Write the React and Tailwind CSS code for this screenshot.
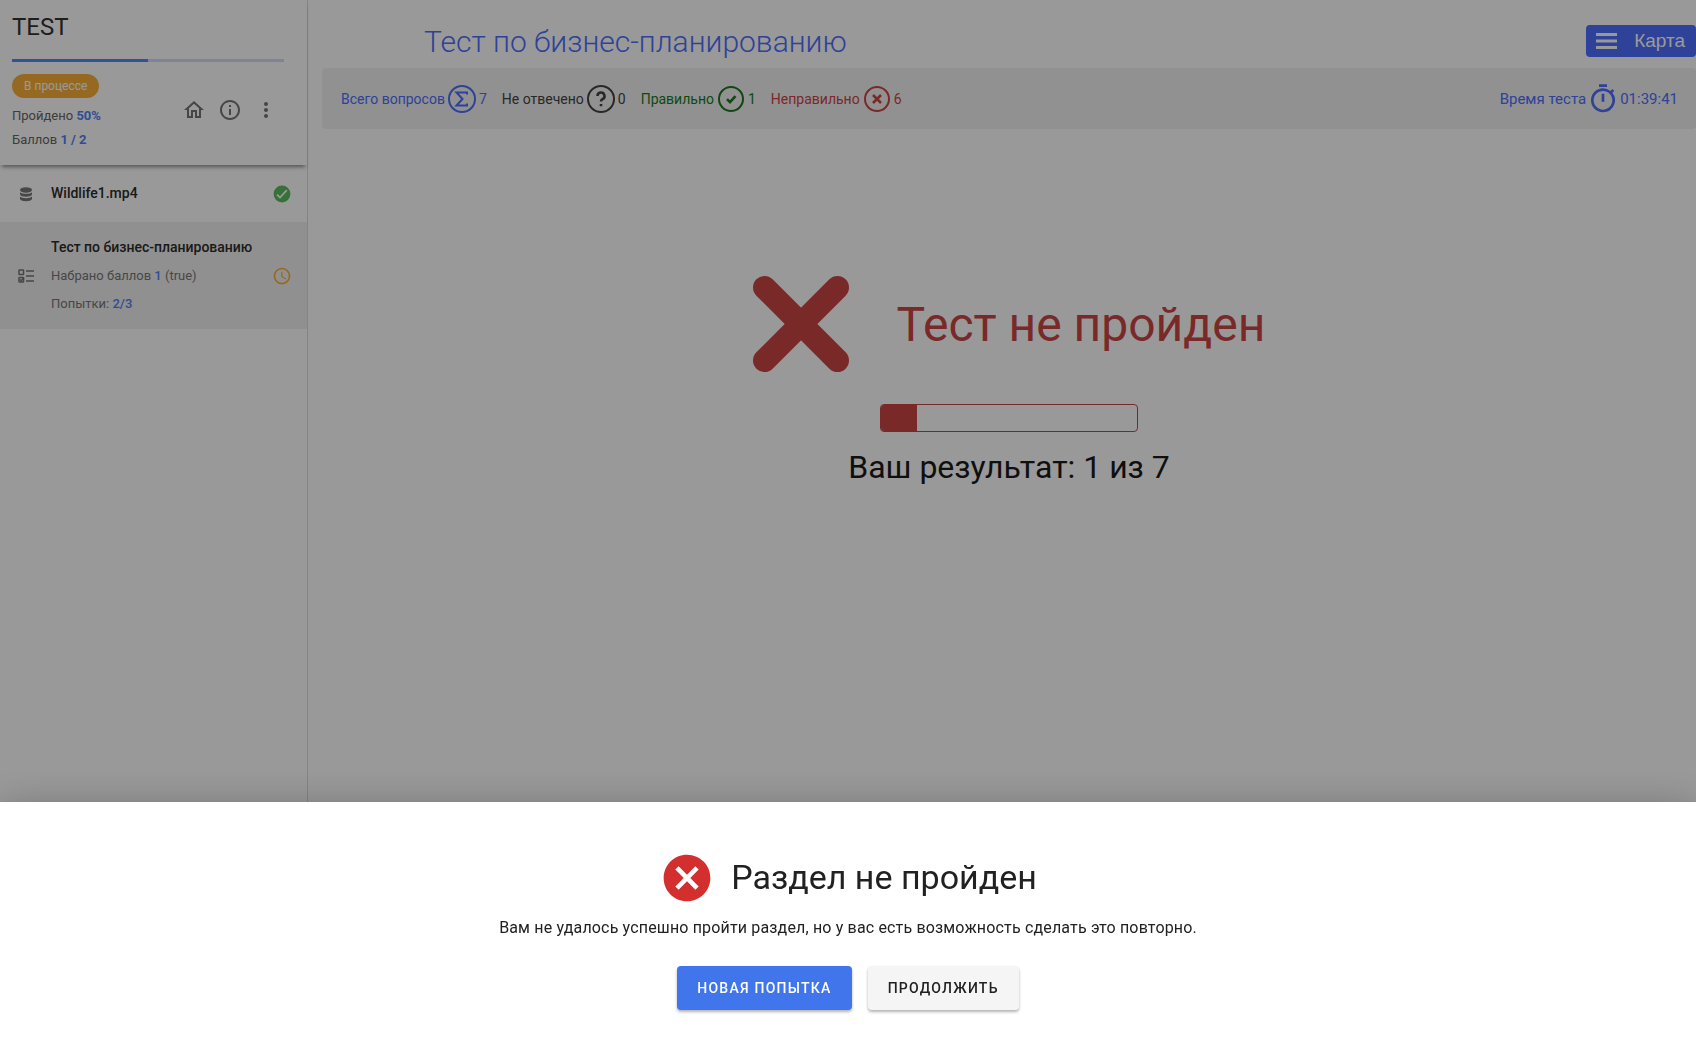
import React from 'react';
import { MdOutlineHome, MdInfoOutline, MdMoreVert, MdAccessTime, MdCancel, MdOutlineTimer } from 'react-icons/md';

const stats = [
  { label: 'Всего вопросов', value: 7, icon: 'sum', color: 'text-[#4b6efd]' },
  { label: 'Не отвечено', value: 0, icon: 'question', color: 'text-[#444444]' },
  { label: 'Правильно', value: 1, icon: 'check', color: 'text-[#1a7a1a]' },
  { label: 'Неправильно', value: 6, icon: 'cross', color: 'text-[#cc4444]' },
];

const glyphs = {
  sum: 'M20 10.5V8.5H9.5l6 6.5-6 6.5H20v-2',
  question: 'M11.5 12a3.5 3.5 0 1 1 5 3.2c-1 .6-1.5 1.1-1.5 2.3M15 20v2.2',
  check: 'M11 15.2l3 3 5.5-6',
  cross: 'M11 11l8 8M19 11l-8 8',
};

function StatIcon({ name }) {
  return (
    <svg viewBox="0 0 30 30" className="size-[30px]" fill="none" stroke="currentColor" aria-hidden="true">
      <circle cx="15" cy="15" r={name === 'check' || name === 'cross' ? 12 : 13} strokeWidth="2" />
      <path d={glyphs[name]} strokeWidth={name === 'sum' ? 2 : 2.6} />
    </svg>
  );
}

function DatabaseIcon() {
  return (
    <svg viewBox="0 0 12 15" className="w-3 h-[15px]" fill="currentColor" aria-hidden="true">
      <ellipse cx="6" cy="3" rx="6" ry="2.7" />
      <path d="M0 5.2c2 2.2 10 2.2 12 0v2.200c-1 3-11 3-12 0zM0 9.600c2 2.200 10 2.200 12 0v2.400c-1 3-11 3-12 0z" />
    </svg>
  );
}

function QuizIcon() {
  return (
    <svg viewBox="0 0 16 14" className="w-4 h-[14px]" fill="none" stroke="currentColor" strokeWidth="1.5" aria-hidden="true">
      <rect x="1" y="1" width="4.5" height="4.5" rx="0.5" />
      <rect x="1" y="8.5" width="4.5" height="4.5" rx="0.5" />
      <path d="M2 10.5l1.2 1.2L6 8.5M8 2h8M8 7h8M8 12h8" />
    </svg>
  );
}

function DoneIcon() {
  return (
    <svg viewBox="0 0 20 20" className="size-5" fill="none" aria-hidden="true">
      <circle cx="10" cy="10" r="8.4" fill="#5cbb60" />
      <path d="M5 10.6l3 3 6.8-7.4" stroke="#fff" strokeWidth="1.7" />
    </svg>
  );
}

function Sidebar() {
  return (
    <aside className="w-[308px] shrink-0 border-r border-[#dcdcdc]">
      <div className="relative h-[165px] px-3 pt-3 bg-white shadow-[0_4px_4px_-2px_rgba(0,0,0,0.45)]">
        <h2 className="text-2xl leading-[30px] text-[#333333]">TEST</h2>
        <div className="mt-[17px] mr-[11px] h-[3px] bg-[#cfdcfb]">
          <div className="h-full w-1/2 bg-[#5687ff]"></div>
        </div>
        <div className="flex items-center justify-between mt-3">
          <div className="text-[13px] leading-6 text-[#666666]">
            <span className="inline-block rounded-full bg-[#fbb03b] px-3 text-xs leading-6 text-white">В процессе</span>
            <p className="mt-[6px]">Пройдено <b className="font-bold text-[#5280f5]">50%</b></p>
            <p>Баллов <b className="font-bold text-[#5280f5]">1 / 2</b></p>
          </div>
          <div className="flex gap-3 mr-[17px] pb-[6px] text-2xl text-[#757575]">
            <button type="button" aria-label="Домой"><MdOutlineHome /></button>
            <button type="button" aria-label="Информация"><MdInfoOutline /></button>
            <button type="button" aria-label="Ещё"><MdMoreVert /></button>
          </div>
        </div>
      </div>
      <ul className="pt-px">
        <li className="flex items-center h-14 pl-[18px] pr-[15px]">
          <span className="flex w-4 justify-center text-[#777777]"><DatabaseIcon /></span>
          <span className="flex-1 ml-[17px] pb-[2px] text-sm font-medium text-[#2c2c2c]">Wildlife1.mp4</span>
          <DoneIcon />
        </li>
        <li className="flex items-center h-[107px] pl-[18px] pr-[15px] bg-[#f0f0f0]">
          <span className="text-[#777777]"><QuizIcon /></span>
          <div className="flex-1 ml-[17px] text-[13px] leading-7 text-[#777777]">
            <p className="h-7 text-sm leading-[26px] font-medium text-[#2c2c2c]">Тест по бизнес-планированию</p>
            <p>Набрано баллов <span className="font-medium text-[#5280f5]">1</span> (true)</p>
            <p>Попытки: <span className="font-medium text-[#5280f5]">2/3</span></p>
          </div>
          <MdAccessTime className="size-5 text-[#fbb03b]" />
        </li>
      </ul>
    </aside>
  );
}

function Result() {
  return (
    <section className="flex flex-col items-center mt-[147px] text-[#1a1a1a]">
      <div className="flex items-center gap-12 text-[#cb4545]">
        <svg viewBox="0 0 96 96" className="size-24" stroke="currentColor" strokeWidth="23" strokeLinecap="round" aria-hidden="true">
          <path d="M11.5 11.5l73 73M84.5 11.5l-73 73" />
        </svg>
        <h2 className="pt-[2px] text-5xl">Тест не пройден</h2>
      </div>
      <div className="mt-8 h-7 w-[258px] overflow-hidden rounded border border-[#cb4545]">
        <div className="h-full w-[14%] bg-[#cb4545]"></div>
      </div>
      <p className="mt-[15px] text-[32px] leading-10">Ваш результат: 1 из 7</p>
    </section>
  );
}

function Main() {
  return (
    <main className="flex-1 pl-[14px]">
      <header className="flex items-center justify-between h-[68px] pt-[14px]">
        <h1 className="ml-[102px] pt-[2px] text-3xl font-light text-[#4b6efd]">Тест по бизнес-планированию</h1>
        <button type="button" className="flex items-center justify-between w-[110px] h-8 pl-[10px] pr-[11px] rounded bg-[#4b6efd] text-white">
          <svg viewBox="0 0 21 16" className="w-[21px] h-4" fill="currentColor" aria-hidden="true">
            <path d="M0 0h21v3H0zM0 6.5h21v3H0zM0 13h21v3H0z" />
          </svg>
          <span className="pt-px font-['Liberation_Sans',sans-serif] text-[19px]">Карта</span>
        </button>
      </header>
      <div className="flex items-center justify-between h-[61px] pl-[19px] pr-[18px] rounded bg-[#f2f2f2]">
        <div className="flex gap-[15px] text-sm">
          {stats.map((s) => (
            <div key={s.label} className={`flex items-center gap-[2px] ${s.color}`}>
              {s.label}
              <StatIcon name={s.icon} />
              {s.value}
            </div>
          ))}
        </div>
        <div className="flex items-center gap-px text-[15px] leading-6 text-[#4b6efd]">
          <span className="pt-px">Время теста</span>
          <MdOutlineTimer size={32} />
          <span className="pt-px">01:39:41</span>
        </div>
      </div>
      <Result />
    </main>
  );
}

function Dialog() {
  return (
    <div className="fixed inset-0 flex flex-col justify-end bg-black/40">
      <div role="dialog" aria-labelledby="dialog-title" className="flex flex-col items-center bg-white pt-12 pb-[46px] text-[#212121] shadow-[0_8px_40px_rgba(0,0,0,0.3)]">
        <div className="flex items-center gap-4">
          <MdCancel size={56} className="text-[#d32f2f]" />
          <h2 id="dialog-title" className="pb-[2px] text-[34px] leading-10">Раздел не пройден</h2>
        </div>
        <p className="mt-[10px] text-base tracking-[0.01em]">Вам не удалось успешно пройти раздел, но у вас есть возможность сделать это повторно.</p>
        <div className="flex gap-4 mt-[26px] text-sm font-medium tracking-[0.09em]">
          <button type="button" className="h-11 px-5 rounded bg-[#4175eb] text-white shadow-[0_2px_3px_rgba(0,0,0,0.3)]">НОВАЯ ПОПЫТКА</button>
          <button type="button" className="h-11 px-5 rounded bg-[#f5f5f5] shadow-[0_2px_3px_rgba(0,0,0,0.3)]">ПРОДОЛЖИТЬ</button>
        </div>
      </div>
    </div>
  );
}

export default function App() {
  return (
    <div className="flex min-h-screen bg-white font-['Roboto',sans-serif]">
      <Sidebar />
      <Main />
      <Dialog />
    </div>
  );
}
